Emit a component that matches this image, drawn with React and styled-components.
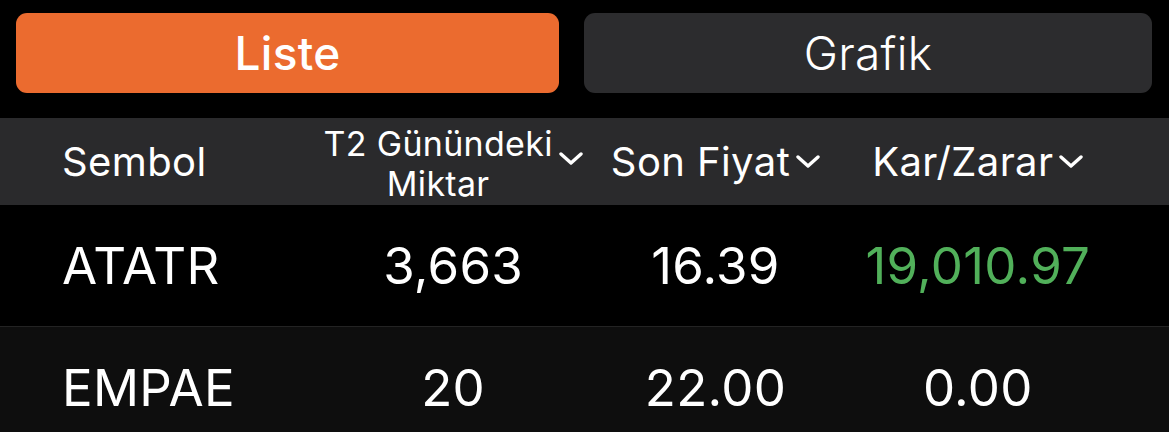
import React from 'react'
import styled, { createGlobalStyle } from 'styled-components'

const GlobalStyle = createGlobalStyle`
  html, body {
    margin: 0;
    padding: 0;
    background: #000;
  }
  body {
    font-family: Inter, "Noto Sans", sans-serif;
    color: #fff;
    -webkit-font-smoothing: antialiased;
  }
`

const Page = styled.div`
  width: 1169px;
  height: 432px;
  overflow: hidden;
  background: #000;
`

const Segments = styled.div`
  display: grid;
  grid-template-columns: 543px 568px;
  gap: 25px;
  padding: 13px 17px 25px 16px;
`

const SegmentButton = styled.button`
  height: 80px;
  border: none;
  border-radius: 11px;
  background: ${p => (p.active ? '#eb6b2f' : '#2c2c2e')};
  color: #fff;
  font-family: Inter, "Noto Sans", sans-serif;
  font-size: 46px;
  font-weight: ${p => (p.active ? 500 : 300)};
  letter-spacing: 0.3px;
  padding: 0;
  cursor: pointer;
`

const Grid = styled.div`
  display: grid;
  grid-template-columns: 260px 1fr 1fr 1fr;
  align-items: center;
  padding: 0 60px 0 62px;
`

const HeaderRow = styled(Grid)`
  height: 87px;
  background: #2a2a2c;
`

const HeaderCell = styled.div`
  display: flex;
  align-items: center;
  justify-content: ${p => (p.left ? 'flex-start' : 'center')};
  gap: 6px;
  font-weight: 400;
  text-align: center;
`

const HeaderLabel = styled.span`
  display: block;
  white-space: nowrap;
  font-size: ${p => (p.multi ? '34px' : '40px')};
  line-height: ${p => (p.multi ? '40px' : '48px')};
  letter-spacing: ${p => (p.multi ? '0.3px' : '0.4px')};
  margin-top: ${p => (p.multi ? '4px' : '0')};
`

const Chevron = styled.svg`
  width: 24px;
  height: 13px;
  flex: none;
  margin-top: ${p => (p.multi ? '-6px' : '0')};
`

const DataRow = styled(Grid)`
  height: 121px;
  background: ${p => (p.alt ? '#0e0e0e' : '#000')};
  border-top: ${p => (p.alt ? '1px solid #232323' : 'none')};
`

const Cell = styled.div`
  font-size: 51px;
  font-weight: 400;
  letter-spacing: 0.3px;
  text-align: ${p => (p.left ? 'left' : 'center')};
  color: ${p => (p.positive ? '#51b05a' : '#fff')};
  white-space: nowrap;
`

const Down = ({ multi }) => (
  <Chevron multi={multi} viewBox="0 0 24 13" fill="none">
    <path d="M2 2 L12 11 L22 2" stroke="#fff" strokeWidth="3.4" strokeLinecap="round" strokeLinejoin="round" />
  </Chevron>
)

const rows = [
  { symbol: 'ATATR', qty: '3,663', price: '16.39', pnl: '19,010.97', positive: true },
  { symbol: 'EMPAE', qty: '20', price: '22.00', pnl: '0.00', positive: false },
]

export default function App() {
  return (
    <Page>
      <GlobalStyle />
      <Segments>
        <SegmentButton active>Liste</SegmentButton>
        <SegmentButton>Grafik</SegmentButton>
      </Segments>
      <HeaderRow>
        <HeaderCell left>
          <HeaderLabel>Sembol</HeaderLabel>
        </HeaderCell>
        <HeaderCell>
          <HeaderLabel multi>
            T2 Günündeki
            <br />
            Miktar
          </HeaderLabel>
          <Down multi />
        </HeaderCell>
        <HeaderCell>
          <HeaderLabel>Son Fiyat</HeaderLabel>
          <Down />
        </HeaderCell>
        <HeaderCell>
          <HeaderLabel>Kar/Zarar</HeaderLabel>
          <Down />
        </HeaderCell>
      </HeaderRow>
      {rows.map((r, i) => (
        <DataRow key={r.symbol} alt={i % 2 === 1}>
          <Cell left>{r.symbol}</Cell>
          <Cell>{r.qty}</Cell>
          <Cell>{r.price}</Cell>
          <Cell positive={r.positive}>{r.pnl}</Cell>
        </DataRow>
      ))}
    </Page>
  )
}
